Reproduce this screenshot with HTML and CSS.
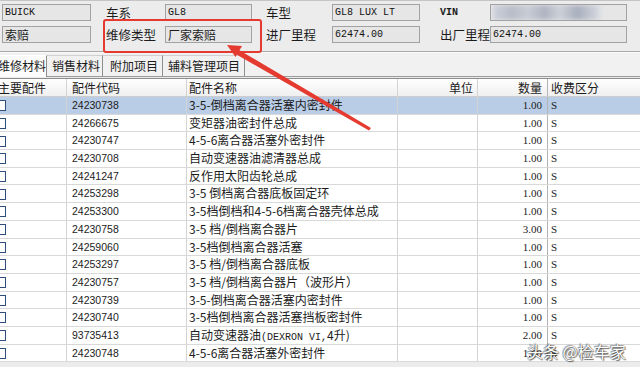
FILE: index.html
```html
<!DOCTYPE html>
<html lang="zh">
<head>
  <meta charset="UTF-8">
  <title>维修材料</title>
  <link rel="stylesheet" href="styles.css">
</head>
<body>

<div class="topline"></div>

<!-- vehicle info -->
<div class="info">
  <div class="field mono">BUICK</div>
  <div class="label l1">车系</div>
  <div class="field mono">GL8</div>
  <div class="label l2">车型</div>
  <div class="field mono">GL8 LUX LT</div>
  <div class="label l3 mono-label">VIN</div>
  <div class="field vin"><span class="blur"></span></div>

  <div class="field">索赔</div>
  <div class="label l1">维修类型</div>
  <div class="field">厂家索赔</div>
  <div class="label l2">进厂里程</div>
  <div class="field mono">62474.00</div>
  <div class="label l3b">出厂里程</div>
  <div class="field mono">62474.00</div>
</div>

<div class="groove"></div>

<!-- tabs -->
<div class="tabbar">
  <div class="tab active t1">维修材料</div>
  <div class="tab t2">销售材料</div>
  <div class="tab t3">附加项目</div>
  <div class="tab t4">辅料管理项目</div>
</div>

<!-- parts grid -->
<div class="grid">
  <div class="row head">
    <span class="c1">主要配件</span>
    <span class="c2">配件代码</span>
    <span class="c3">配件名称</span>
    <span class="c4">单位</span>
    <span class="c5">数量</span>
    <span class="c6">收费区分</span>
  </div>
  <div class="row sel">
    <span class="c1"><i class="chk"></i></span><span class="c2 code">24230738</span><span class="c3">3-5-倒档离合器活塞内密封件</span><span class="c4"></span><span class="c5 num">1.00</span><span class="c6 num">S</span>
  </div>
  <div class="row">
    <span class="c1"><i class="chk"></i></span><span class="c2 code">24266675</span><span class="c3">变矩器油密封件总成</span><span class="c4"></span><span class="c5 num">1.00</span><span class="c6 num">S</span>
  </div>
  <div class="row">
    <span class="c1"><i class="chk"></i></span><span class="c2 code">24230747</span><span class="c3">4-5-6离合器活塞外密封件</span><span class="c4"></span><span class="c5 num">1.00</span><span class="c6 num">S</span>
  </div>
  <div class="row">
    <span class="c1"><i class="chk"></i></span><span class="c2 code">24230708</span><span class="c3">自动变速器油滤清器总成</span><span class="c4"></span><span class="c5 num">1.00</span><span class="c6 num">S</span>
  </div>
  <div class="row">
    <span class="c1"><i class="chk"></i></span><span class="c2 code">24241247</span><span class="c3">反作用太阳齿轮总成</span><span class="c4"></span><span class="c5 num">1.00</span><span class="c6 num">S</span>
  </div>
  <div class="row">
    <span class="c1"><i class="chk"></i></span><span class="c2 code">24253298</span><span class="c3">3-5 倒档离合器底板固定环</span><span class="c4"></span><span class="c5 num">1.00</span><span class="c6 num">S</span>
  </div>
  <div class="row">
    <span class="c1"><i class="chk"></i></span><span class="c2 code">24253300</span><span class="c3">3-5档倒档和4-5-6档离合器壳体总成</span><span class="c4"></span><span class="c5 num">1.00</span><span class="c6 num">S</span>
  </div>
  <div class="row">
    <span class="c1"><i class="chk"></i></span><span class="c2 code">24230758</span><span class="c3">3-5 档/倒档离合器片</span><span class="c4"></span><span class="c5 num">3.00</span><span class="c6 num">S</span>
  </div>
  <div class="row">
    <span class="c1"><i class="chk"></i></span><span class="c2 code">24259060</span><span class="c3">3-5档倒档离合器活塞</span><span class="c4"></span><span class="c5 num">1.00</span><span class="c6 num">S</span>
  </div>
  <div class="row">
    <span class="c1"><i class="chk"></i></span><span class="c2 code">24253297</span><span class="c3">3-5 档/倒档离合器底板</span><span class="c4"></span><span class="c5 num">1.00</span><span class="c6 num">S</span>
  </div>
  <div class="row">
    <span class="c1"><i class="chk"></i></span><span class="c2 code">24230757</span><span class="c3">3-5 档/倒档离合器片（波形片）</span><span class="c4"></span><span class="c5 num">1.00</span><span class="c6 num">S</span>
  </div>
  <div class="row">
    <span class="c1"><i class="chk"></i></span><span class="c2 code">24230739</span><span class="c3">3-5-倒档离合器活塞内密封件</span><span class="c4"></span><span class="c5 num">1.00</span><span class="c6 num">S</span>
  </div>
  <div class="row">
    <span class="c1"><i class="chk"></i></span><span class="c2 code">24230740</span><span class="c3">3-5档倒档离合器活塞挡板密封件</span><span class="c4"></span><span class="c5 num">1.00</span><span class="c6 num">S</span>
  </div>
  <div class="row">
    <span class="c1"><i class="chk"></i></span><span class="c2 code">93735413</span><span class="c3">自动变速器油<span class="latin">(DEXRON VI,</span>4升)</span><span class="c4"></span><span class="c5 num">2.00</span><span class="c6 num">S</span>
  </div>
  <div class="row">
    <span class="c1"><i class="chk"></i></span><span class="c2 code">24230748</span><span class="c3">4-5-6离合器活塞外密封件</span><span class="c4"></span><span class="c5 num">1.00</span><span class="c6 num">S</span>
  </div>
</div>

<!-- annotation overlay -->
<div class="mark"></div>
<svg class="arrow" width="640" height="367" viewBox="0 0 640 367">
  <polygon points="371,128 239,50 236.5,54.5 369,130.5" fill="#e53a2f"/>
  <polygon points="227,45 242,46 235.5,57" fill="#e53a2f"/>
</svg>

<div class="watermark">头条 @检车家</div>

</body>
</html>
```

FILE: styles.css
```css
body {
  margin: 0;
  width: 640px;
  height: 367px;
  overflow: hidden;
  position: relative;
  background: #ececec;
  font-family: "Noto Sans CJK SC", sans-serif;
  font-size: 12px;
  color: #1c1c1c;
}

.topline {
  height: 1px;
  background: #c4c4c4;
}

/* vehicle info */
.info {
  display: grid;
  grid-template-columns: 89px 74px 87px 80px 88px 70px 137px;
  grid-auto-rows: 17px;
  row-gap: 5px;
  padding: 3px 0 0 2px;
}

.field {
  box-sizing: border-box;
  background: #e6e6e6;
  border: 1px solid #a2a2a2;
  padding-left: 2px;
  line-height: 15px;
  white-space: nowrap;
  overflow: hidden;
}

.mono {
  font-family: "Liberation Mono", monospace;
  font-size: 10px;
  color: #111;
}

.label {
  line-height: 17px;
  font-size: 12.5px;
  white-space: nowrap;
}

.l1 { padding-left: 15px; }
.l2 { padding-left: 14px; }
.l3 { padding-left: 20px; }
.l3b { padding-left: 20px; margin-right: -5px; }

.mono-label {
  font-family: "Liberation Mono", monospace;
  font-size: 10px;
  font-weight: bold;
}

.vin .blur {
  display: block;
  width: 108px;
  height: 100%;
  background: linear-gradient(90deg, #cdd1da, #b7bcc8 18%, #c9cdd6 32%, #aeb3c0 48%, #ced2da 62%, #a8aebc 78%, #c6cad4 92%, #dcdfe4);
  filter: blur(2px);
}

.groove {
  margin-top: 8px;
  height: 1px;
  background: #a8a8a8;
  border-bottom: 1px solid #fafafa;
}

/* tabs */
.tabbar {
  display: flex;
  height: 21px;
  padding-top: 2px;
  background: #f1f1f1;
  border-bottom: 1px solid #9a9a9a;
  margin-left: -6px;
}

.tab {
  box-sizing: border-box;
  height: 21px;
  line-height: 20px;
  padding-left: 5px;
  border-top: 1px solid #d0d0d0;
  border-right: 1px solid #8e8e8e;
  white-space: nowrap;
}

.tab.active {
  background: #fbfbfb;
  border-top-color: #fff;
  height: 22px;
  margin-bottom: -1px;
  padding-left: 4px;
}

.t1 { width: 53px; }
.t2 { width: 56px; }
.t3 { width: 60px; padding-left: 7px; }
.t4 { width: 82px; }

/* parts grid */
.grid {
  margin-left: -6px;
  width: 680px;
  margin-top: 1px;
  background: #fff;
  border-top: 1px solid #8c8c8c;
}

.row {
  display: grid;
  grid-template-columns: 73px 120px 211px 80px 70px 1fr;
  height: 17.7px;
  box-sizing: border-box;
  border-bottom: 1px solid #d9d9d9;
}

.row > span {
  box-sizing: border-box;
  border-right: 1px solid #d3d3d3;
  line-height: 16.7px;
  white-space: nowrap;
  overflow: hidden;
}

.row > .c5 {
  border-right-color: #b4b4b4;
}

.head {
  height: 18px;
  background: linear-gradient(#ffffff, #efefef);
  border-bottom: 1px solid #cdcdcd;
}

.head > span {
  line-height: 17px;
}

.sel {
  background: #b9cde7;
}

.c1 { padding-left: 4px; }
.c2 { padding-left: 5px; }
.c3 { padding-left: 2px; }
.c4 { text-align: right; padding-right: 4px; }
.c5 { text-align: right; padding-right: 5px; }
.c6 { padding-left: 3px; }

.row:not(.head) .c1 {
  padding-left: 1px;
}

.chk {
  display: inline-block;
  width: 9px;
  height: 9px;
  border: 1px solid #2e4f7c;
  background: #fff;
  vertical-align: middle;
  margin-top: -2px;
}

.code {
  font-family: "Liberation Sans", sans-serif;
  font-size: 10.5px;
}

.num {
  font-family: "Liberation Serif", serif;
  font-size: 11px;
}

.latin {
  font-family: "Liberation Mono", monospace;
  font-size: 10px;
}

/* annotation */
.mark {
  position: absolute;
  left: 103px;
  top: 19px;
  width: 159px;
  height: 34px;
  box-sizing: border-box;
  border: 2px solid #e53a2f;
  border-radius: 3px;
}

.arrow {
  position: absolute;
  left: 0;
  top: 0;
}

.watermark {
  position: absolute;
  left: 527px;
  top: 339px;
  font-size: 16px;
  color: #fff;
  white-space: nowrap;
  text-shadow: 0 0 1px #333, 1px 1px 1px rgba(0, 0, 0, 0.55), -1px -1px 1px rgba(0, 0, 0, 0.35);
}
```
